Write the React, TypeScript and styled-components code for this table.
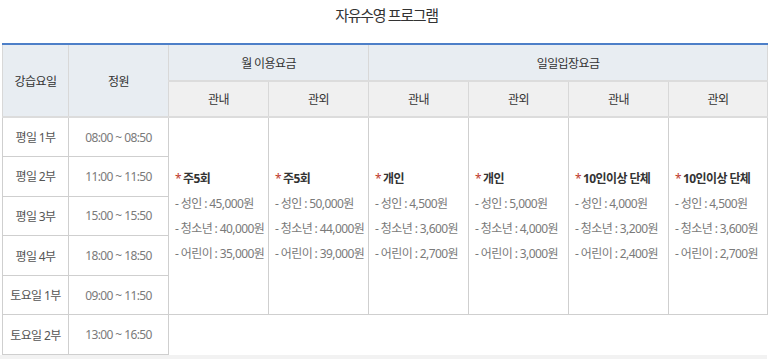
import React from "react";
import styled, { createGlobalStyle } from "styled-components";

const Global = createGlobalStyle`
  html, body { margin: 0; padding: 0; background: #fff; }
  body { font-family: "Noto Sans", "Noto Sans CJK KR", sans-serif; }
`;

const Page = styled.div`
  width: 773px;
`;

const Title = styled.h2`
  margin: 0;
  height: 43px;
  display: flex;
  align-items: center;
  justify-content: center;
  padding-bottom: 14px;
  box-sizing: border-box;
  font-size: 15px;
  font-weight: normal;
  letter-spacing: -1.3px;
  color: #333;
`;

const Scroller = styled.div`
  width: 767px;
  padding-left: 2px;
  box-sizing: border-box;
`;

const Table = styled.table`
  width: 765px;
  table-layout: fixed;
  border-collapse: collapse;
  font-size: 12px;
  letter-spacing: -0.6px;
`;

const HeadRow = styled.tr<{ $h: number }>`
  height: ${(p) => p.$h}px;
`;

const BodyRow = styled.tr`
  height: 39.6px;
`;

const HeadCell = styled.th<{ $tone: "main" | "sub"; $top?: boolean }>`
  background: ${(p) => (p.$tone === "main" ? "#e8edf2" : "#f0f0f0")};
  border: 1px solid #d8d8d8;
  border-top: ${(p) => (p.$top ? "2px solid #4d7fc8" : "1px solid #d8d8d8")};
  border-bottom-width: 2px;
  border-bottom-color: #dcdcdc;
  font-weight: normal;
  color: #333;
  text-align: center;
  vertical-align: middle;
  padding: 0;
`;

const BodyCell = styled.td<{ $muted?: boolean }>`
  border: 1px solid #cfcfcf;
  text-align: center;
  vertical-align: middle;
  color: ${(p) => (p.$muted ? "#7a7a7a" : "#555")};
  padding: 0;
  white-space: nowrap;
`;

const FeeCell = styled.td`
  border: 1px solid #cfcfcf;
  vertical-align: middle;
  text-align: left;
  padding: 0 0 0 6px;
  white-space: nowrap;
`;

const FeeTitle = styled.div`
  line-height: 25px;
  font-weight: bold;
  color: #333;
`;

const Star = styled.span`
  color: #c0392b;
  font-weight: normal;
  margin-right: 2px;
`;

const FeeLine = styled.div`
  line-height: 25px;
  color: #7a7a7a;
`;

const Track = styled.div`
  width: 767px;
  height: 6px;
  background: #f2f2f2;
`;

type Fee = { title: string; lines: string[] };

const fees: Fee[] = [
  { title: "주5회", lines: ["- 성인 : 45,000원", "- 청소년 : 40,000원", "- 어린이 : 35,000원"] },
  { title: "주5회", lines: ["- 성인 : 50,000원", "- 청소년 : 44,000원", "- 어린이 : 39,000원"] },
  { title: "개인", lines: ["- 성인 : 4,500원", "- 청소년 : 3,600원", "- 어린이 : 2,700원"] },
  { title: "개인", lines: ["- 성인 : 5,000원", "- 청소년 : 4,000원", "- 어린이 : 3,000원"] },
  { title: "10인이상 단체", lines: ["- 성인 : 4,000원", "- 청소년 : 3,200원", "- 어린이 : 2,400원"] },
  { title: "10인이상 단체", lines: ["- 성인 : 4,500원", "- 청소년 : 3,600원", "- 어린이 : 2,700원"] },
];

const sessions = [
  ["평일 1부", "08:00 ~ 08:50"],
  ["평일 2부", "11:00 ~ 11:50"],
  ["평일 3부", "15:00 ~ 15:50"],
  ["평일 4부", "18:00 ~ 18:50"],
  ["토요일 1부", "09:00 ~ 11:50"],
  ["토요일 2부", "13:00 ~ 16:50"],
];

export default function App() {
  return (
    <Page>
      <Global />
      <Title>자유수영 프로그램</Title>
      <Scroller>
        <Table>
          <colgroup>
            <col style={{ width: 66 }} />
            <col style={{ width: 100 }} />
            <col style={{ width: 100 }} />
            <col style={{ width: 100 }} />
            <col style={{ width: 100 }} />
            <col style={{ width: 100 }} />
            <col style={{ width: 100 }} />
            <col style={{ width: 99 }} />
          </colgroup>
          <thead>
            <HeadRow $h={37}>
              <HeadCell $tone="main" $top rowSpan={2}>강습요일</HeadCell>
              <HeadCell $tone="main" $top rowSpan={2}>정원</HeadCell>
              <HeadCell $tone="main" $top colSpan={2}>월 이용요금</HeadCell>
              <HeadCell $tone="main" $top colSpan={4}>일일입장요금</HeadCell>
            </HeadRow>
            <HeadRow $h={36}>
              <HeadCell $tone="sub">관내</HeadCell>
              <HeadCell $tone="sub">관외</HeadCell>
              <HeadCell $tone="sub">관내</HeadCell>
              <HeadCell $tone="sub">관외</HeadCell>
              <HeadCell $tone="sub">관내</HeadCell>
              <HeadCell $tone="sub">관외</HeadCell>
            </HeadRow>
          </thead>
          <tbody>
            {sessions.map(([day, time], i) => (
              <BodyRow key={day}>
                <BodyCell>{day}</BodyCell>
                <BodyCell $muted>{time}</BodyCell>
                {i === 0 &&
                  fees.map((f, j) => (
                    <FeeCell key={j} rowSpan={5}>
                      <FeeTitle>
                        <Star>*</Star>
                        {f.title}
                      </FeeTitle>
                      {f.lines.map((l) => (
                        <FeeLine key={l}>{l}</FeeLine>
                      ))}
                    </FeeCell>
                  ))}
              </BodyRow>
            ))}
          </tbody>
        </Table>
      </Scroller>
      <Track />
    </Page>
  );
}
